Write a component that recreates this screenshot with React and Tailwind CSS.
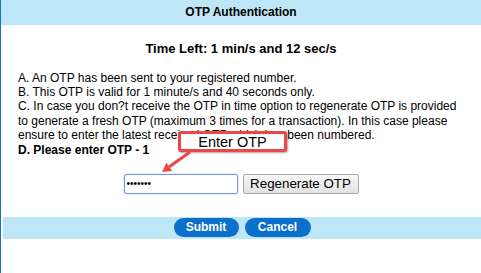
import React from "react";

export default function App() {
  return (
    <div className="relative h-[273px] w-[481px] overflow-hidden bg-white border-l border-[#1a6fc4] font-['Liberation_Sans',Arial,sans-serif] text-black">
      <div className="h-[25px] bg-[#bde6f6] flex items-center justify-center pb-[2px] text-[12px] leading-[14px] font-bold">
        OTP Authentication
      </div>
      <div className="mt-[16px] h-[15px] text-center text-[13px] leading-[15px] font-bold">
        Time Left: 1 min/s and 12 sec/s
      </div>
      <div className="mt-[14.5px] pl-[17px] pr-[16px] text-[12px] leading-[14.4px]">
        <div>A. An OTP has been sent to your registered number.</div>
        <div>B. This OTP is valid for 1 minute/s and 40 seconds only.</div>
        <div>
          C. In case you don?t receive the OTP in time option to regenerate OTP is provided to generate a fresh OTP (maximum 3 times for a transaction). In this case please ensure to enter the latest received OTP which has been numbered.
        </div>
        <div className="font-bold">D. Please enter OTP - 1</div>
      </div>
      <div className="mt-[16.6px] flex justify-center gap-[5px]">
        <input
          type="password"
          readOnly
          defaultValue="1234567"
          className="w-[114px] h-[20px] rounded-[2px] border border-[#6f9be0] shadow-[0_0_2px_#9fc0f0] px-[2px] text-[10px] outline-none font-['Liberation_Sans',Arial,sans-serif]"
        />
        <button className="w-[116px] h-[20px] rounded-[2px] border border-[#a9a9a9] bg-gradient-to-b from-[#f7f7f7] to-[#e2e2e2] text-[13.33px] leading-[16px] text-black">
          Regenerate OTP
        </button>
      </div>
      <div className="mt-[23px] ml-[2px] h-[22px] bg-[#bde6f6] flex justify-center gap-[6px] pt-px">
        <button className="w-[65px] h-[19px] rounded-full bg-[#0b6fcc] text-white text-[12px] leading-[14px] font-bold">
          Submit
        </button>
        <button className="w-[66px] h-[19px] rounded-full bg-[#0b6fcc] text-white text-[12px] leading-[14px] font-bold">
          Cancel
        </button>
      </div>

      <div className="absolute left-[177px] top-[131px] w-[109px] h-[21px] border-[3px] border-[#ee4545] bg-white rounded-[3px] shadow-[1px_1px_2px_rgba(0,0,0,0.35)] flex items-center justify-center text-[14.5px] leading-[16px]">
        Enter OTP
      </div>
      <svg className="absolute left-0 top-0 pointer-events-none" width="481" height="273" viewBox="0 0 481 273">
        <line x1="189" y1="152" x2="168.3" y2="166.8" stroke="#ee4545" strokeWidth="3" />
        <polygon points="161,172 171.2,170.9 165.4,162.7" fill="#ee4545" />
      </svg>
    </div>
  );
}
